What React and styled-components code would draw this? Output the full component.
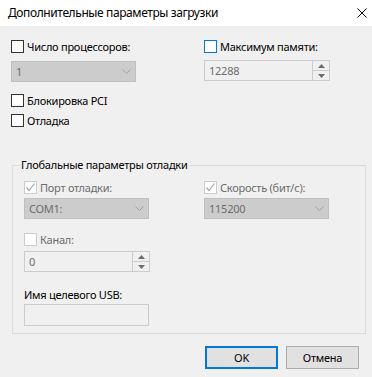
import React from "react";
import styled, { createGlobalStyle } from "styled-components";

const GlobalStyle = createGlobalStyle`
  html, body {
    margin: 0;
    padding: 0;
    background: #f0f0f0;
  }
`;

const Window = styled.div`
  width: 372px;
  height: 377px;
  background: #f0f0f0;
  font-family: "Noto Sans", "Open Sans", "Liberation Sans", sans-serif;
  font-size: 11px;
  letter-spacing: -0.25px;
  color: #000;
  display: flex;
  flex-direction: column;
  overflow: hidden;
`;

const TitleBar = styled.div`
  height: 26px;
  background: #fff;
  display: flex;
  align-items: center;
  justify-content: space-between;
  padding: 0 5px 0 8px;
  flex-shrink: 0;
`;

const Title = styled.div`
  font-size: 12px;
  letter-spacing: -0.4px;
  margin-top: -1px;
`;

const CloseButton = styled.div`
  width: 10px;
  height: 10px;
  display: flex;
`;

const Body = styled.div`
  padding: 14px 7px 0 11px;
  display: flex;
  flex-direction: column;
`;

const TwoCols = styled.div`
  display: grid;
  grid-template-columns: ${(p) => p.$first}px 125px;
`;

const Field = styled.div`
  display: flex;
  flex-direction: column;
  gap: ${(p) => p.$gap}px;
  margin-top: ${(p) => p.$top || 0}px;
`;

const CheckRow = styled.label`
  display: flex;
  align-items: center;
  height: 13px;
  gap: 3px;
  color: ${(p) => (p.$disabled ? "#6d6d6d" : "#000")};
  white-space: nowrap;
`;

const Box = styled.span`
  width: 13px;
  height: 13px;
  box-sizing: border-box;
  border: 1px solid
    ${(p) => (p.$focus ? "#0078d7" : p.$disabled ? "#cccccc" : "#333333")};
  background: #fff;
  display: flex;
  align-items: center;
  justify-content: center;
  flex-shrink: 0;
`;

const Combo = styled.div`
  width: 125px;
  height: 21px;
  box-sizing: border-box;
  border: 1px solid #bfbfbf;
  background: #cccccc;
  color: #6d6d6d;
  display: flex;
  align-items: center;
  justify-content: space-between;
  padding: 0 4px 0 4px;
`;

const Spin = styled.div`
  width: 126px;
  height: 21px;
  box-sizing: border-box;
  border: 1px solid #cccccc;
  background: #f0f0f0;
  color: #6d6d6d;
  display: flex;
  align-items: stretch;
`;

const SpinValue = styled.div`
  flex: 1;
  display: flex;
  align-items: center;
  padding-left: 4px;
`;

const SpinButtons = styled.div`
  width: 16px;
  display: flex;
  flex-direction: column;
  border-left: 1px solid #cccccc;
`;

const SpinButton = styled.div`
  flex: 1;
  display: flex;
  align-items: center;
  justify-content: center;
  border-top: ${(p) => (p.$lower ? "1px solid #cccccc" : "none")};
`;

const TextBox = styled.div`
  width: 125px;
  height: 22px;
  box-sizing: border-box;
  border: 1px solid #cccccc;
  background: #f0f0f0;
`;

const Stack = styled.div`
  display: flex;
  flex-direction: column;
  gap: 7px;
  margin-top: 12px;
`;

const Group = styled.fieldset`
  margin: 30px 0 0 1px;
  width: 354px;
  box-sizing: border-box;
  border: 1px solid #dcdcdc;
  padding: 8px 0 7px 11px;
  display: flex;
  flex-direction: column;
`;

const Legend = styled.legend`
  padding: 0 1px;
  margin-left: -4px;
  line-height: 16px;
`;

const Label = styled.div`
  line-height: 16px;
  height: 16px;
`;

const Footer = styled.div`
  display: flex;
  justify-content: flex-end;
  gap: 8px;
  padding: 12px 6px 0 0;
`;

const Button = styled.div`
  width: 73px;
  height: 23px;
  box-sizing: border-box;
  border: ${(p) => (p.$primary ? "2px solid #0078d7" : "1px solid #adadad")};
  background: #e1e1e1;
  display: flex;
  align-items: center;
  justify-content: center;
`;

const Check = () => (
  <svg width="11" height="11" viewBox="0 0 11 11">
    <polyline points="1.5,5.5 4,8.5 9.5,1.5" fill="none" stroke="#a8a8a8" strokeWidth="1.2" />
  </svg>
);

const Chevron = () => (
  <svg width="9" height="5" viewBox="0 0 9 5">
    <polyline points="0.5,0.5 4.5,4.5 8.5,0.5" fill="none" stroke="#a0a0a0" strokeWidth="1" />
  </svg>
);

const Tri = ({ up }) => (
  <svg width="7" height="4" viewBox="0 0 7 4">
    <polygon points={up ? "0,4 7,4 3.5,0" : "0,0 7,0 3.5,4"} fill="#6d6d6d" />
  </svg>
);

const CheckBox = ({ label, checked, disabled, focus }) => (
  <CheckRow $disabled={disabled}>
    <Box $disabled={disabled} $focus={focus}>
      {checked && <Check />}
    </Box>
    {label}
  </CheckRow>
);

const Dropdown = ({ value }) => (
  <Combo>
    <span>{value}</span>
    <Chevron />
  </Combo>
);

const Spinner = ({ value }) => (
  <Spin>
    <SpinValue>{value}</SpinValue>
    <SpinButtons>
      <SpinButton>
        <Tri up />
      </SpinButton>
      <SpinButton $lower>
        <Tri />
      </SpinButton>
    </SpinButtons>
  </Spin>
);

export default function App() {
  return (
    <>
      <GlobalStyle />
      <Window>
        <TitleBar>
          <Title>Дополнительные параметры загрузки</Title>
          <CloseButton>
            <svg width="10" height="10" viewBox="0 0 10 10">
              <path d="M0.5 0.5 L9.5 9.5 M9.5 0.5 L0.5 9.5" stroke="#000" strokeWidth="1" />
            </svg>
          </CloseButton>
        </TitleBar>
        <Body>
          <TwoCols $first={193}>
            <Field $gap={8}>
              <CheckBox label="Число процессоров:" />
              <Dropdown value="1" />
            </Field>
            <Field $gap={7}>
              <CheckBox label="Максимум памяти:" focus />
              <Spinner value="12288" />
            </Field>
          </TwoCols>
          <Stack>
            <CheckBox label="Блокировка PCI" />
            <CheckBox label="Отладка" />
          </Stack>
          <Group>
            <Legend>Глобальные параметры отладки</Legend>
            <TwoCols $first={180}>
              <Field $gap={4}>
                <CheckBox label="Порт отладки:" checked disabled />
                <Dropdown value="COM1:" />
              </Field>
              <Field $gap={4}>
                <CheckBox label="Скорость (бит/с):" checked disabled />
                <Dropdown value="115200" />
              </Field>
            </TwoCols>
            <Field $gap={5} $top={14}>
              <CheckBox label="Канал:" disabled />
              <Spinner value="0" />
            </Field>
            <Field $gap={1} $top={15}>
              <Label>Имя целевого USB:</Label>
              <TextBox />
            </Field>
          </Group>
          <Footer>
            <Button $primary>OK</Button>
            <Button>Отмена</Button>
          </Footer>
        </Body>
      </Window>
    </>
  );
}
